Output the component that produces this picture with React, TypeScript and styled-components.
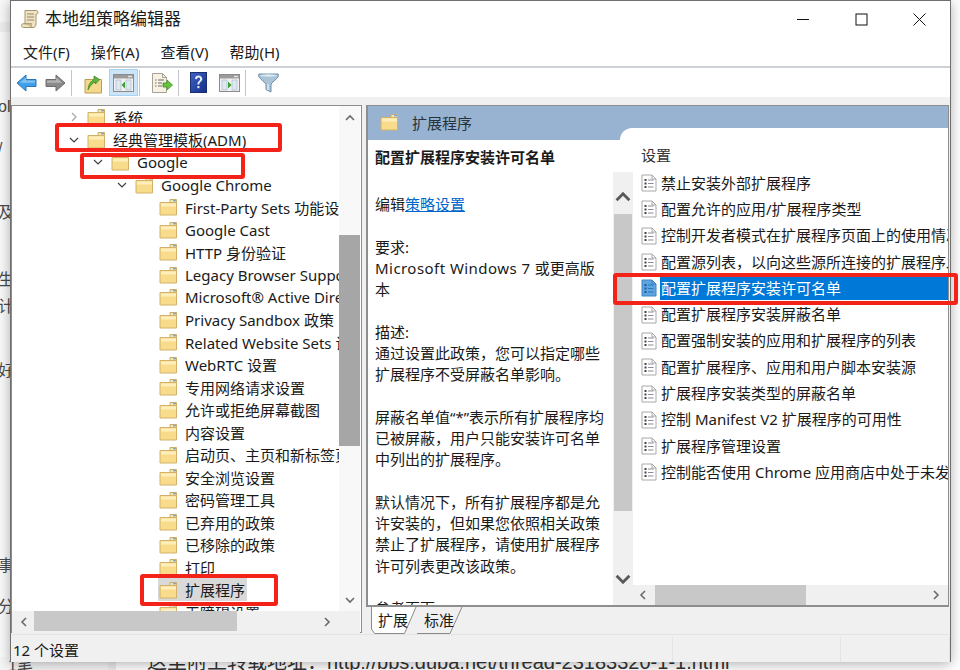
import React from 'react';
import styled, { createGlobalStyle } from 'styled-components';

const FONT = `"Noto Sans", "Noto Sans CJK SC", sans-serif`;
const COMMA = '\uFF0C';

const treeItems = [
    { label: '系统', level: 0, arrow: 'right' },
    { label: '经典管理模板(ADM)', level: 0, arrow: 'down' },
    { label: 'Google', level: 1, arrow: 'down' },
    { label: 'Google Chrome', level: 2, arrow: 'down' },
    { label: 'First-Party Sets 功能设置', level: 3 },
    { label: 'Google Cast', level: 3 },
    { label: 'HTTP 身份验证', level: 3 },
    { label: 'Legacy Browser Support', level: 3 },
    { label: 'Microsoft® Active Directory', level: 3 },
    { label: 'Privacy Sandbox 政策', level: 3 },
    { label: 'Related Website Sets 设置', level: 3 },
    { label: 'WebRTC 设置', level: 3 },
    { label: '专用网络请求设置', level: 3 },
    { label: '允许或拒绝屏幕截图', level: 3 },
    { label: '内容设置', level: 3 },
    { label: '启动页、主页和新标签页', level: 3 },
    { label: '安全浏览设置', level: 3 },
    { label: '密码管理工具', level: 3 },
    { label: '已弃用的政策', level: 3 },
    { label: '已移除的政策', level: 3 },
    { label: '打印', level: 3 },
    { label: '扩展程序', level: 3, selected: true },
    { label: '无障碍设置', level: 3 },
];

const settings = [
    '禁止安装外部扩展程序',
    '配置允许的应用/扩展程序类型',
    '控制开发者模式在扩展程序页面上的使用情况',
    `配置源列表${COMMA}以向这些源所连接的扩展程序发送`,
    '配置扩展程序安装许可名单',
    '配置扩展程序安装屏蔽名单',
    '配置强制安装的应用和扩展程序的列表',
    '配置扩展程序、应用和用户脚本安装源',
    '扩展程序安装类型的屏蔽名单',
    '控制 Manifest V2 扩展程序的可用性',
    '扩展程序管理设置',
    '控制能否使用 Chrome 应用商店中处于未发布状态',
];

const strayChars = [
    { text: 'ol', gap: 98 },
    { text: '/', gap: 24 },
    { text: '及', gap: 46 },
    { text: '生', gap: 49 },
    { text: '计', gap: 9 },
    { text: '好', gap: 46 },
    { text: '事', gap: 177 },
    { text: '分', gap: 23 },
];

const Chevron: React.FC<{ dir: 'up' | 'down' | 'left' | 'right'; size?: number; color?: string; weight?: number }> = ({
    dir,
    size = 10,
    color = '#6a6a6a',
    weight = 1.6,
}) => {
    const points = {
        up: '1,7 5,3 9,7',
        down: '1,3 5,7 9,3',
        left: '7,1 3,5 7,9',
        right: '3,1 7,5 3,9',
    };
    return (
        <svg width={size} height={size} viewBox="0 0 10 10">
            <polyline points={points[dir]} fill="none" stroke={color} strokeWidth={weight} />
        </svg>
    );
};

const FolderIcon: React.FC = () => (
    <svg width="19" height="18" viewBox="0 0 19 18">
        <path d="M11 1.5h6.5v3H11z" fill="#f6e6b0" stroke="#c9ad6c" />
        <rect x="14" y="2" width="3" height="1.4" fill="#7fa8d8" />
        <path d="M1 4.5h16.5v12.5H1z" fill="#f8dc8c" stroke="#d2b26a" />
        <path d="M2 5.5h15v3H2z" fill="#fdeebb" />
    </svg>
);

const DocIcon: React.FC<{ active?: boolean }> = ({ active }) => {
    const fill = active ? '#5ea4e0' : '#ffffff';
    const edge = active ? '#3f83c4' : '#a8a8a8';
    const ink = active ? '#1e5a98' : '#444444';
    const line = active ? '#2f76b8' : '#8c8c9c';
    return (
        <svg width="16" height="18" viewBox="0 0 16 18">
            <path d="M1 1h10l4 4v12H1z" fill={fill} stroke={edge} />
            <path d="M11 1v4h4" fill="none" stroke={edge} />
            {[5, 8.5, 12].map((y) => (
                <g key={y}>
                    <rect x="3.5" y={y} width="2" height="2" fill={ink} />
                    <rect x="7" y={y + 0.5} width="5.5" height="1" fill={line} />
                </g>
            ))}
        </svg>
    );
};

const ScrollIcon: React.FC = () => (
    <svg width="18" height="20" viewBox="0 0 18 20">
        <path d="M4 1.5h11c1.4 0 2 1 2 2s-.6 1.8-2 1.8V15c0 2-1 3.5-3 3.5H2.5C1.2 18.5.5 17.6.5 16.5s.9-1.8 2-1.8H4z" fill="#efe3c4" stroke="#a79468" />
        <path d="M6 5h7M6 8h7M6 11h7" stroke="#9a8a66" strokeWidth="1" />
        <path d="M2.5 14.7h8c-.8 1-.8 2.8.8 3.8" fill="#d8c69c" stroke="#a79468" />
    </svg>
);

const ArrowIcon: React.FC<{ flip?: boolean; fill: string; edge: string }> = ({ flip, fill, edge }) => (
    <svg width="21" height="20" viewBox="0 0 21 20" style={flip ? { transform: 'scaleX(-1)' } : undefined}>
        <path d="M1 10l9-8v4.5h10v7H10V18z" fill={fill} stroke={edge} />
        <path d="M3.5 10L10 4.5v3h9v2.2H5z" fill="#ffffff" opacity="0.35" />
    </svg>
);

const UpFolderIcon: React.FC = () => (
    <svg width="19" height="22" viewBox="0 0 19 22">
        <path d="M1 7.500h16.500V21H1z" fill="#f3d88e" stroke="#bd9d55" />
        <path d="M4 18c.5-6 3-9 6-10.500V4L15.500 7.500 11.500 12V10C8.500 11 6 13.500 4 18z" fill="#5fb43c" stroke="#3d8a26" strokeWidth="0.8" />
    </svg>
);

const PaneIcon: React.FC<{ arrowRight?: boolean }> = ({ arrowRight }) => (
    <svg width="21" height="21" viewBox="0 0 21 21">
        <rect x="0.5" y="2.5" width="20" height="17" fill="#f2f2f2" stroke="#8b8b8b" />
        <rect x="1" y="3" width="19" height="3.5" fill="#9b9b9b" />
        <rect x="15" y="3.8" width="4" height="1.4" fill="#e4e4e4" />
        <rect x="3" y="8" width="5" height="10" fill="#dfe7f0" stroke="#9fb2c8" strokeWidth="0.6" />
        <rect x="13" y="8" width="5" height="10" fill="#dfe7f0" stroke="#9fb2c8" strokeWidth="0.6" />
        {arrowRight ? <path d="M9 9.5l3.500 3.500L9 16.500z" fill="#3aa12e" /> : <path d="M12 9.500L8.500 13l3.500 3.500z" fill="#3aa12e" />}
    </svg>
);

const ExportIcon: React.FC = () => (
    <svg width="22" height="22" viewBox="0 0 22 22">
        <path d="M1.5 1.5h10l4 4v15h-14z" fill="#f6f1e2" stroke="#a8a294" />
        <path d="M11.5 1.5v4h4" fill="none" stroke="#a8a294" />
        <path d="M4 8h1.5M7 8h6M4 11h1.5M7 11h4M4 14h1.5M7 14h4" stroke="#6e6e6e" />
        <path d="M12 11h4V8l5.5 5-5.5 5v-3h-4z" fill="#69c040" stroke="#3f9526" strokeWidth="0.8" />
    </svg>
);

const HelpIcon: React.FC = () => (
    <svg width="17" height="21" viewBox="0 0 17 21">
        <defs>
            <linearGradient id="help-bg" x1="0" y1="0" x2="1" y2="1">
                <stop offset="0" stopColor="#3f63c4" />
                <stop offset="1" stopColor="#142f86" />
            </linearGradient>
        </defs>
        <rect x="0.5" y="0.5" width="16" height="20" fill="url(#help-bg)" stroke="#1c2f70" />
        <path d="M5 7c0-2.5 1.6-3.5 3.6-3.5S12.3 4.7 12.3 7c0 2.700-3 2.600-3 5.500H7.400c0-3.300 2.700-3.400 2.700-5.400 0-1-.6-1.600-1.500-1.600S7 6.200 7 7.300z" fill="#e8ecf8" />
        <rect x="7.400" y="14" width="2" height="2.200" fill="#e8ecf8" />
    </svg>
);

const FilterIcon: React.FC = () => (
    <svg width="21" height="21" viewBox="0 0 21 21">
        <path d="M.8 2h19.400v3l-7.200 7v8l-5-2.500V12L.8 5z" fill="#a9c4d8" stroke="#6f8fa6" />
        <ellipse cx="10.500" cy="3.500" rx="8.500" ry="1.200" fill="#dbe9f2" />
        <path d="M10 12v6" stroke="#dceaf3" strokeWidth="1.500" />
    </svg>
);

const TabShape: React.FC<{ active?: boolean }> = ({ active }) => (
    <TabOutline viewBox="0 0 46 27" preserveAspectRatio="none">
        <path
            d={active ? 'M.5 0V22l3 4.500h30L45 0' : 'M0 26.500h33L45 0'}
            fill={active ? '#ffffff' : 'none'}
            stroke="#8a8a8a"
        />
    </TabOutline>
);

const App: React.FC = () => (
    <>
        <GlobalStyle />
        <Page>
            <SideStrip>
                {strayChars.map((c) => (
                    <StrayChar key={c.text} $gap={c.gap}>{c.text}</StrayChar>
                ))}
            </SideStrip>
            <Window>
                <TitleBar>
                    <ScrollIcon />
                    <TitleText>本地组策略编辑器</TitleText>
                    <WindowButtons>
                        <WindowButton>
                            <svg width="13" height="13" viewBox="0 0 13 13"><path d="M0 6.500h12" stroke="#111" /></svg>
                        </WindowButton>
                        <WindowButton>
                            <svg width="13" height="13" viewBox="0 0 13 13"><rect x="1" y="1" width="11" height="11" fill="none" stroke="#111" /></svg>
                        </WindowButton>
                        <WindowButton>
                            <svg width="13" height="13" viewBox="0 0 13 13"><path d="M.5.500l12 12M12.500.500l-12 12" stroke="#111" /></svg>
                        </WindowButton>
                    </WindowButtons>
                </TitleBar>
                <MenuBar>
                    <MenuItem>文件(F)</MenuItem>
                    <MenuItem>操作(A)</MenuItem>
                    <MenuItem>查看(V)</MenuItem>
                    <MenuItem>帮助(H)</MenuItem>
                </MenuBar>
                <Toolbar>
                    <ToolButton $w={29}><ArrowIcon fill="#3f9fe8" edge="#2a76b8" /></ToolButton>
                    <ToolButton $w={29}><ArrowIcon flip fill="#8a8a8a" edge="#6c6c6c" /></ToolButton>
                    <ToolSeparator />
                    <ToolButton $w={36} $pad={4}><UpFolderIcon /></ToolButton>
                    <ToolButton $w={29} $active><PaneIcon /></ToolButton>
                    <ToolSeparator />
                    <ToolButton $w={36} $pad={5}><ExportIcon /></ToolButton>
                    <ToolSeparator />
                    <ToolButton $w={35} $pad={2}><HelpIcon /></ToolButton>
                    <ToolButton $w={29}><PaneIcon arrowRight /></ToolButton>
                    <ToolSeparator />
                    <ToolButton $w={42}><FilterIcon /></ToolButton>
                </Toolbar>
                <Panes>
                    <TreePane>
                        <TreeList>
                            {treeItems.map((item) => (
                                <TreeRow key={item.label} $level={item.level}>
                                    <TreeArrow>
                                        {item.arrow === 'right' && <Chevron dir="right" color="#a6a6a6" weight={1.2} />}
                                        {item.arrow === 'down' && <Chevron dir="down" color="#404040" weight={1.2} />}
                                    </TreeArrow>
                                    <TreeLabel $selected={item.selected}>
                                        <FolderIcon />
                                        <span>{item.label}</span>
                                    </TreeLabel>
                                </TreeRow>
                            ))}
                        </TreeList>
                        <TreeVScroll>
                            <Chevron dir="up" />
                            <TreeVThumb />
                            <Chevron dir="down" />
                        </TreeVScroll>
                        <TreeHScroll>
                            <Chevron dir="left" />
                            <TreeHThumb />
                            <Chevron dir="right" />
                        </TreeHScroll>
                        <ScrollCorner />
                    </TreePane>
                    <RightColumn>
                        <DetailPane>
                            <DetailHeader>
                                <FolderIcon />
                                <span>扩展程序</span>
                                <HeaderTab />
                            </DetailHeader>
                            <DetailBody>
                                <Description>
                                    <DescTitle>配置扩展程序安装许可名单</DescTitle>
                                    <p>编辑<DescLink>策略设置</DescLink></p>
                                    <br />
                                    <p>要求:</p>
                                    <p><DescLatin>Microsoft Windows 7 </DescLatin>或更高版</p>
                                    <p>本</p>
                                    <br />
                                    <p>描述:</p>
                                    <p>通过设置此政策{COMMA}您可以指定哪些</p>
                                    <p>扩展程序不受屏蔽名单影响。</p>
                                    <br />
                                    <p>屏蔽名单值“*”表示所有扩展程序均</p>
                                    <p>已被屏蔽{COMMA}用户只能安装许可名单</p>
                                    <p>中列出的扩展程序。</p>
                                    <br />
                                    <p>默认情况下{COMMA}所有扩展程序都是允</p>
                                    <p>许安装的{COMMA}但如果您依照相关政策</p>
                                    <p>禁止了扩展程序{COMMA}请使用扩展程序</p>
                                    <p>许可列表更改该政策。</p>
                                    <br />
                                    <p>参考页面:</p>
                                </Description>
                                <DescScroll>
                                    <Chevron dir="up" size={16} color="#5a5a5a" weight={1.8} />
                                    <DescThumb />
                                    <Chevron dir="down" size={16} color="#5a5a5a" weight={1.8} />
                                </DescScroll>
                                <SettingsColumn>
                                    <SettingsHead>设置</SettingsHead>
                                    <SettingsList>
                                        {settings.map((text, i) => (
                                            <SettingRow key={text}>
                                                <DocIcon active={i === 4} />
                                                <SettingText $selected={i === 4}>{text}</SettingText>
                                            </SettingRow>
                                        ))}
                                    </SettingsList>
                                    <SettingsHScroll>
                                        <Chevron dir="left" />
                                        <SettingsHThumb />
                                        <Chevron dir="right" />
                                    </SettingsHScroll>
                                </SettingsColumn>
                            </DetailBody>
                        </DetailPane>
                        <TabStrip>
                            <Tab $active><TabShape active /><span>扩展</span></Tab>
                            <Tab><TabShape /><span>标准</span></Tab>
                        </TabStrip>
                    </RightColumn>
                </Panes>
                <StatusBar>
                    <StatusCell $w={663}>12 个设置</StatusCell>
                    <StatusCell $w={166} />
                    <StatusCell $w={107} />
                </StatusBar>
            </Window>
            <PageLine>这里附上转载地址{'\uFF1A'}http://bbs.duba.net/thread-23183320-1-1.html</PageLine>
            <PageCorner>1笔</PageCorner>
            <RedBox $x={55} $y={123} $w={227} $h={29} />
            <RedBox $x={80} $y={153} $w={165} $h={26} />
            <RedBox $x={613} $y={273} $w={345} $h={32} />
            <RedBox $x={140} $y={574} $w={138} $h={32} />
        </Page>
    </>
);

const GlobalStyle = createGlobalStyle`
    html, body {
        margin: 0;
        padding: 0;
        background: #ffffff;
    }
    p {
        margin: 0;
    }
`;

const Page = styled.div`
    position: relative;
    width: 960px;
    height: 670px;
    overflow: hidden;
    display: grid;
    grid-template-columns: 10px 941px 9px;
    grid-template-rows: 662px 8px;
    font-family: ${FONT};
    color: #1a1a1a;
`;

const SideStrip = styled.div`
    grid-row: 1 / 3;
    grid-column: 1;
    overflow: hidden;
    background: linear-gradient(#f8f8f8 22px, #efefef 22px, #efefef 32px, #fafafa 32px);
    font-family: "Liberation Sans", "Noto Sans CJK SC", sans-serif;
    font-size: 16px;
    color: #4a4a4a;
    white-space: nowrap;
`;

const StrayChar = styled.div<{ $gap: number }>`
    margin-top: ${(p) => p.$gap}px;
    line-height: 18px;
    margin-left: -2px;
`;

const Window = styled.div`
    grid-row: 1;
    grid-column: 2;
    z-index: 1;
    display: flex;
    flex-direction: column;
    border: 1px solid #6f6f6f;
    border-bottom: none;
    background: #ffffff;
    box-shadow: 0 2px 12px rgba(0, 0, 0, 0.32);
`;

const TitleBar = styled.div`
    height: 36px;
    display: flex;
    align-items: center;
    padding-left: 10px;
    flex-shrink: 0;
`;

const TitleText = styled.div`
    margin: -3px 0 0 6px;
    font-size: 17px;
`;

const WindowButtons = styled.div`
    margin-left: auto;
    display: flex;
    margin-right: 2px;
`;

const WindowButton = styled.div`
    width: 58px;
    height: 36px;
    display: flex;
    align-items: center;
    justify-content: center;
`;

const MenuBar = styled.div`
    height: 29px;
    display: flex;
    align-items: center;
    gap: 21px;
    padding-left: 12px;
    border-bottom: 2px solid #cdd1d6;
    flex-shrink: 0;
`;

const MenuItem = styled.div`
    font-size: 15px;
`;

const Toolbar = styled.div`
    height: 29px;
    display: flex;
    align-items: center;
    padding-left: 1px;
    flex-shrink: 0;
`;

const ToolButton = styled.div<{ $w: number; $pad?: number; $active?: boolean }>`
    width: ${(p) => p.$w}px;
    height: 27px;
    flex-shrink: 0;
    display: flex;
    align-items: center;
    justify-content: center;
    box-sizing: border-box;
    padding-left: ${(p) => p.$pad || 0}px;
    background: ${(p) => (p.$active ? '#cce4f7' : 'transparent')};
    border: 1px solid ${(p) => (p.$active ? '#a8d4f4' : 'transparent')};
`;

const ToolSeparator = styled.div`
    width: 1px;
    height: 26px;
    margin: 0 1px;
    background: #c4c4c4;
    flex-shrink: 0;
`;

const Panes = styled.div`
    flex: 1;
    min-height: 0;
    display: flex;
    gap: 4px;
    padding-top: 8px;
    background: #f0f0f0;
`;

const TreePane = styled.div`
    width: 351px;
    box-sizing: border-box;
    border: 1px solid #8c8c8c;
    background: #ffffff;
    display: grid;
    grid-template-columns: 327px 21px;
    grid-template-rows: 505px 22px;
    margin-bottom: 1px;
`;

const TreeList = styled.div`
    overflow: hidden;
`;

const TreeRow = styled.div<{ $level: number }>`
    height: 22.5px;
    display: flex;
    align-items: center;
    padding-left: ${(p) => 54 + p.$level * 24}px;
    white-space: nowrap;
    font-size: 15px;
`;

const TreeArrow = styled.div`
    width: 20px;
    box-sizing: border-box;
    padding-left: 5px;
    margin-left: -2px;
    display: flex;
    align-items: center;
    flex-shrink: 0;
`;

const TreeLabel = styled.div<{ $selected?: boolean }>`
    display: flex;
    align-items: center;
    flex-shrink: 0;
    gap: 7px;
    height: 23px;
    padding: 0 2px 0 1px;
    margin-left: 2px;
    background: ${(p) => (p.$selected ? '#d9d9d9' : 'transparent')};
`;

const TreeVScroll = styled.div`
    background: #f8f8f8;
    display: flex;
    flex-direction: column;
    align-items: center;
    justify-content: space-between;
    padding: 7px 0 6px;
    position: relative;
`;

const TreeVThumb = styled.div`
    position: absolute;
    top: 129px;
    left: 0;
    width: 100%;
    height: 211px;
    background: #a6a6a6;
`;

const TreeHScroll = styled.div`
    background: #f0f0f0;
    display: flex;
    align-items: center;
    justify-content: space-between;
    padding: 0 7px;
    position: relative;
`;

const TreeHThumb = styled.div`
    position: absolute;
    left: 22px;
    top: 0;
    width: 203px;
    height: 20px;
    background: #c8c8c8;
`;

const ScrollCorner = styled.div`
    background: #f0f0f0;
`;

const RightColumn = styled.div`
    width: 583px;
    display: flex;
    flex-direction: column;
`;

const DetailPane = styled.div`
    height: 502px;
    box-sizing: border-box;
    border: 2px solid #8e8e8e;
    border-width: 1px 1px 2px 2px;
    display: flex;
    flex-direction: column;
    background: #ffffff;
    flex-shrink: 0;
`;

const DetailHeader = styled.div`
    position: relative;
    height: 34px;
    flex-shrink: 0;
    background: #98b2d1;
    display: flex;
    align-items: center;
    gap: 13px;
    padding: 0 0 2px 12px;
    box-sizing: border-box;
    font-size: 15px;
    color: #26323e;
`;

const HeaderTab = styled.div`
    position: absolute;
    left: 252px;
    right: 0;
    top: 22px;
    bottom: 0;
    background: #ffffff;
    border-top-left-radius: 12px;
`;

const DetailBody = styled.div`
    flex: 1;
    min-height: 0;
    display: flex;
`;

const Description = styled.div`
    width: 245px;
    box-sizing: border-box;
    padding: 7px 0 0 7px;
    overflow: hidden;
    font-size: 15px;
    line-height: 21.25px;
    white-space: nowrap;
    flex-shrink: 0;
`;

const DescTitle = styled.div`
    font-weight: 700;
    margin-bottom: 26px;
`;

const DescLink = styled.span`
    color: #0066cc;
    text-decoration: underline;
`;

const DescLatin = styled.span`
    letter-spacing: 0.45px;
`;

const DescScroll = styled.div`
    width: 20px;
    margin-top: 32px;
    background: #f0f0f0;
    position: relative;
    flex-shrink: 0;
    display: flex;
    flex-direction: column;
    align-items: center;
    justify-content: space-between;
    padding: 17px 0 18px;
    box-sizing: border-box;
`;

const DescThumb = styled.div`
    position: absolute;
    top: 42px;
    left: 1px;
    width: 18px;
    height: 297px;
    background: #c8c8c8;
`;

const SettingsColumn = styled.div`
    flex: 1;
    min-width: 0;
    display: flex;
    flex-direction: column;
`;

const SettingsHead = styled.div`
    height: 30px;
    padding: 4px 0 0 8px;
    box-sizing: border-box;
    font-size: 15px;
    line-height: 22px;
    color: #333333;
    flex-shrink: 0;
`;

const SettingsList = styled.div`
    flex: 1;
    min-height: 0;
    overflow: hidden;
`;

const SettingRow = styled.div`
    height: 26.3px;
    display: flex;
    align-items: center;
    padding-left: 8px;
    white-space: nowrap;
    font-size: 15px;
`;

const SettingText = styled.div<{ $selected?: boolean }>`
    flex: 1;
    min-width: 0;
    height: 23px;
    line-height: 22px;
    margin-left: 3px;
    padding-left: 1px;
    overflow: hidden;
    background: ${(p) => (p.$selected ? '#0078d7' : 'transparent')};
    color: ${(p) => (p.$selected ? '#ffffff' : 'inherit')};
`;

const SettingsHScroll = styled.div`
    position: relative;
    height: 20px;
    flex-shrink: 0;
    background: #f0f0f0;
    display: flex;
    align-items: center;
    justify-content: space-between;
    padding: 0 7px 0 5px;
`;

const SettingsHThumb = styled.div`
    position: absolute;
    left: 22px;
    top: 0;
    width: 151px;
    height: 100%;
    background: #c8c8c8;
`;

const TabStrip = styled.div`
    flex: 1;
    display: flex;
    padding-left: 5px;
    font-size: 15px;
`;

const Tab = styled.div<{ $active?: boolean }>`
    position: relative;
    width: 46px;
    height: 27px;
    z-index: ${(p) => (p.$active ? 1 : 0)};

    span {
        position: relative;
        display: inline-block;
        padding-left: 7px;
        line-height: 27px;
    }
`;

const TabOutline = styled.svg`
    position: absolute;
    left: 0;
    top: 0;
    width: 46px;
    height: 27px;
`;

const StatusBar = styled.div`
    height: 28px;
    flex-shrink: 0;
    display: flex;
    background: #f0f0f0;
    border-top: 1px solid #e4e4e4;
    box-sizing: border-box;
    font-size: 15px;
`;

const StatusCell = styled.div<{ $w: number }>`
    width: ${(p) => p.$w}px;
    padding-left: 2px;
    line-height: 27px;
    margin-top: 2px;
    border-right: 1px solid #e4e4e4;
`;

const PageLine = styled.div`
    grid-row: 2;
    grid-column: 2;
    padding-left: 137px;
    font-family: "Liberation Sans", "Noto Sans CJK SC", sans-serif;
    font-size: 20px;
    line-height: 20px;
    margin-top: -10px;
    white-space: nowrap;
    color: #333333;
`;

const PageCorner = styled.div`
    position: absolute;
    left: 0;
    top: 657px;
    width: 100px;
    height: 13px;
    padding-left: 8px;
    background: #f5f5f5;
    border-right: 8px solid #ececec;
    font-family: "Liberation Sans", "Noto Sans CJK SC", sans-serif;
    font-size: 16px;
    line-height: 18px;
    color: #4a4a4a;
`;

const RedBox = styled.div<{ $x: number; $y: number; $w: number; $h: number }>`
    position: absolute;
    z-index: 2;
    left: ${(p) => p.$x}px;
    top: ${(p) => p.$y}px;
    width: ${(p) => p.$w}px;
    height: ${(p) => p.$h}px;
    box-sizing: border-box;
    border: 4px solid #f4231a;
    border-radius: 3px;
`;

export default App;
